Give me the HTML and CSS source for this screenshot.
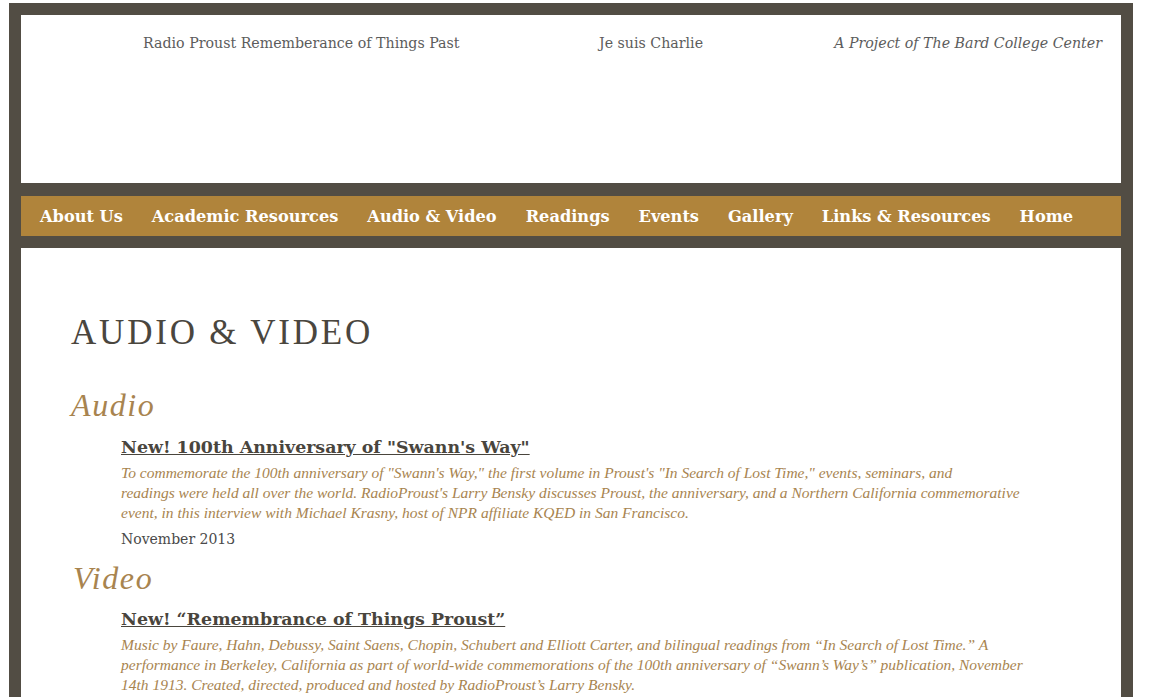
FILE: index.html
```html
<!DOCTYPE html>
<html>
<head>
<meta charset="utf-8">
<title>Audio &amp; Video | Radio Proust</title>
<link rel="stylesheet" href="styles.css">
</head>
<body>
<div class="frame">
  <header class="top">
    <span class="site-title">Radio Proust Rememberance of Things Past</span>
    <span class="charlie">Je suis Charlie</span>
    <span class="project">A Project of The Bard College Center</span>
  </header>
  <nav class="nav">
    <a href="#">About Us</a>
    <a href="#">Academic Resources</a>
    <a href="#">Audio &amp; Video</a>
    <a href="#">Readings</a>
    <a href="#">Events</a>
    <a href="#">Gallery</a>
    <a href="#">Links &amp; Resources</a>
    <a href="#">Home</a>
  </nav>
  <main class="content">
    <h1 class="page-title">AUDIO &amp; VIDEO</h1>
    <h2 class="section">Audio</h2>
    <div class="item">
      <a class="item-title" href="#">New! 100th Anniversary of "Swann's Way"</a>
      <p class="desc">To commemorate the 100th anniversary of "Swann's Way," the first volume in Proust's "In Search of Lost Time," events, seminars, and<br>readings were held all over the world. RadioProust's Larry Bensky discusses Proust, the anniversary, and a Northern California commemorative<br>event, in this interview with Michael Krasny, host of NPR affiliate KQED in San Francisco.</p>
      <p class="date">November 2013</p>
    </div>
    <h2 class="section video">Video</h2>
    <div class="item item-video">
      <a class="item-title" href="#">New! “Remembrance of Things Proust”</a>
      <p class="desc">Music by Faure, Hahn, Debussy, Saint Saens, Chopin, Schubert and Elliott Carter, and bilingual readings from “In Search of Lost Time.” A<br>performance in Berkeley, California as part of world-wide commemorations of the 100th anniversary of “Swann’s Way’s” publication, November<br>14th 1913. Created, directed, produced and hosted by RadioProust’s Larry Bensky.</p>
    </div>
  </main>
</div>
</body>
</html>
```
FILE: styles.css
```css
html, body {
  margin: 0;
  padding: 0;
  background: #ffffff;
}
body {
  font-family: "DejaVu Serif", Georgia, serif;
}
.frame {
  margin: 3px 0 0 9px;
  width: 1100px;
  background: #524d44;
  padding: 12px 12px 0 12px;
}
.top {
  background: #ffffff;
  height: 168px;
  display: flex;
  align-items: flex-start;
  padding-top: 20px;
  box-sizing: border-box;
  font-size: 14.2px;
  color: #5c5c5c;
}
.site-title {
  margin-left: 122px;
  width: 456px;
}
.project {
  margin-left: auto;
  margin-right: 19px;
  font-style: italic;
}
.nav {
  margin-top: 13px;
  background: #b0843b;
  height: 40px;
  display: flex;
  align-items: center;
  gap: 29px;
  padding-left: 19px;
  margin-bottom: 12px;
}
.nav a {
  color: #ffffff;
  font-weight: bold;
  font-size: 16.2px;
  text-decoration: none;
}
.content {
  background: #ffffff;
  padding: 60px 50px 20px 50px;
  min-height: 500px;
}
.page-title {
  margin: 0;
  font-family: "Liberation Serif", serif;
  font-weight: normal;
  font-size: 35px;
  letter-spacing: 2.8px;
  color: #4a463e;
  line-height: 50px;
}
.section {
  margin: 27px 0 0 0;
  font-family: "Liberation Serif", serif;
  font-style: italic;
  font-weight: normal;
  font-size: 32px;
  letter-spacing: 1.6px;
  color: #a8844f;
  line-height: 40px;
}
.section.video {
  margin-top: 8px;
  padding-left: 2px;
}
.item {
  padding-left: 50px;
  margin-top: 8px;
}
.item-video {
  margin-top: 7px;
}
.item-title {
  font-size: 17.4px;
  font-weight: bold;
  color: #49453d;
  text-decoration: underline;
  line-height: 28px;
  display: block;
}
.desc {
  margin: 2px 0 0 0;
  width: 930px;
  font-family: "Liberation Serif", serif;
  font-style: italic;
  font-size: 15.5px;
  line-height: 20px;
  color: #a8844f;
}
.date {
  margin: 5px 0 0 0;
  font-size: 14px;
  color: #4a4a4a;
  line-height: 22px;
}
```
